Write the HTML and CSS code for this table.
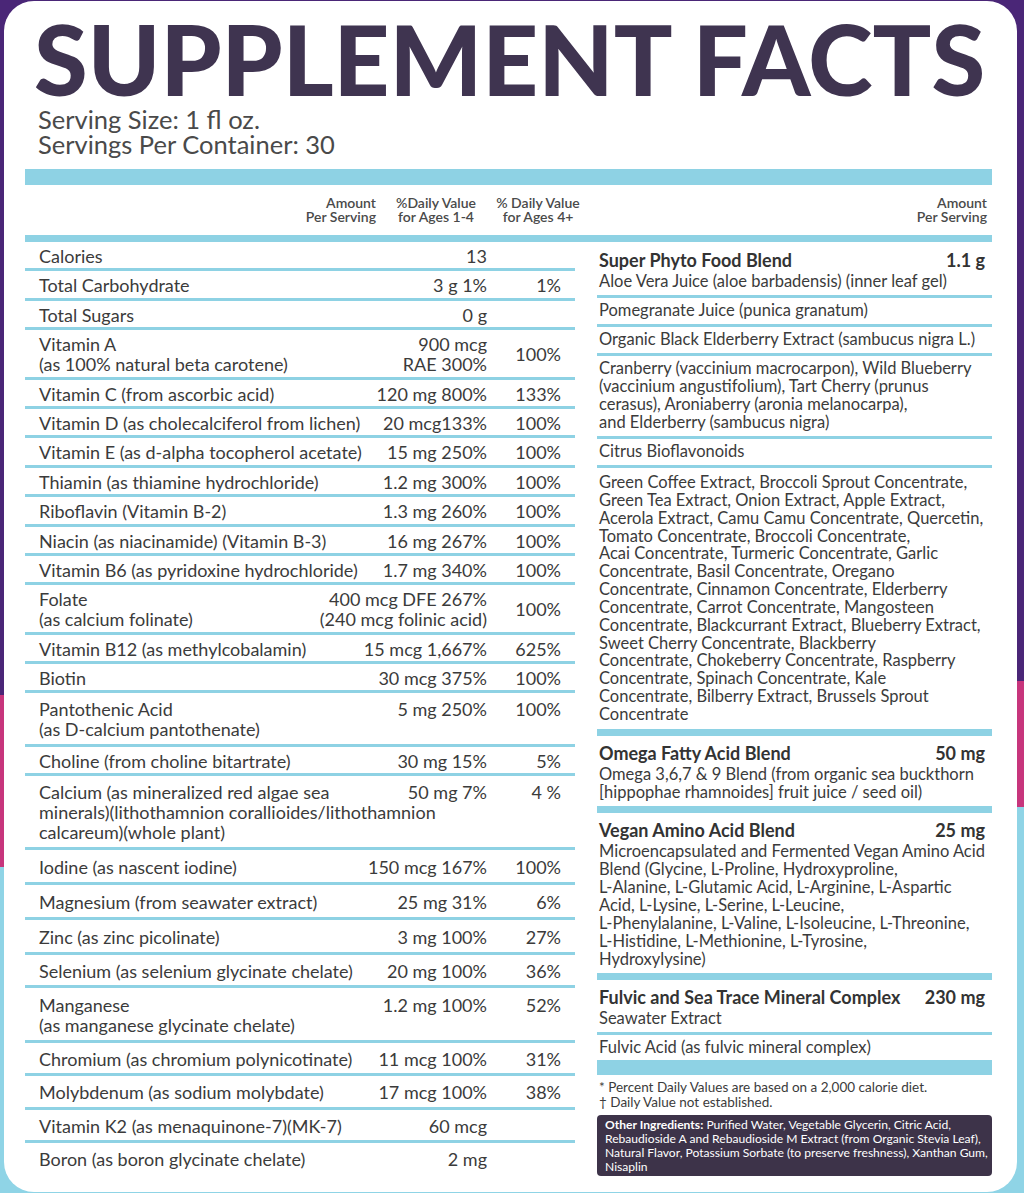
FILE: index.html
```html
<!DOCTYPE html>
<html lang="en">
<head>
    <meta charset="UTF-8">
    <meta name="viewport" content="width=device-width, initial-scale=1.0">
    <title>Supplement Facts</title>
    <link rel="stylesheet" href="styles.css">
</head>
<body>

<div class="label">
    <h1 class="title">SUPPLEMENT FACTS</h1>
    <div class="serving">
        <p>Serving Size: 1 fl oz.</p>
        <p>Servings Per Container: 30</p>
    </div>

    <div class="bar bar-wide"></div>

    <div class="col-head">
        <div class="h-amount">Amount<br>Per Serving</div>
        <div class="h-dv">%Daily Value<br>for Ages 1-4</div>
        <div class="h-dv">% Daily Value<br>for Ages 4+</div>
        <div class="h-right">Amount<br>Per Serving</div>
    </div>

    <div class="bar bar-mid"></div>

    <div class="facts">
        <!-- vitamins and minerals -->
        <div class="nutrients">
            <div class="row"><span class="name">Calories</span><span class="amt">13</span><span class="dv"></span></div>
            <div class="row"><span class="name">Total Carbohydrate</span><span class="amt">3 g 1%</span><span class="dv">1%</span></div>
            <div class="row"><span class="name">Total Sugars</span><span class="amt">0 g</span><span class="dv"></span></div>
            <div class="row"><span class="name">Vitamin A<br>(as 100% natural beta carotene)</span><span class="amt">900 mcg<br>RAE 300%</span><span class="dv mid">100%</span></div>
            <div class="row"><span class="name">Vitamin C (from ascorbic acid)</span><span class="amt">120 mg 800%</span><span class="dv">133%</span></div>
            <div class="row"><span class="name">Vitamin D (as cholecalciferol from lichen)</span><span class="amt">20 mcg133%</span><span class="dv">100%</span></div>
            <div class="row"><span class="name">Vitamin E (as d-alpha tocopherol acetate)</span><span class="amt">15 mg 250%</span><span class="dv">100%</span></div>
            <div class="row"><span class="name">Thiamin (as thiamine hydrochloride)</span><span class="amt">1.2 mg 300%</span><span class="dv">100%</span></div>
            <div class="row"><span class="name">Riboflavin (Vitamin B-2)</span><span class="amt">1.3 mg 260%</span><span class="dv">100%</span></div>
            <div class="row"><span class="name">Niacin (as niacinamide) (Vitamin B-3)</span><span class="amt">16 mg 267%</span><span class="dv">100%</span></div>
            <div class="row"><span class="name">Vitamin B6 (as pyridoxine hydrochloride)</span><span class="amt">1.7 mg 340%</span><span class="dv">100%</span></div>
            <div class="row"><span class="name">Folate<br>(as calcium folinate)</span><span class="amt">400 mcg DFE 267%<br>(240 mcg folinic acid)</span><span class="dv mid">100%</span></div>
            <div class="row"><span class="name">Vitamin B12 (as methylcobalamin)</span><span class="amt">15 mcg 1,667%</span><span class="dv">625%</span></div>
            <div class="row"><span class="name">Biotin</span><span class="amt">30 mcg 375%</span><span class="dv">100%</span></div>
            <div class="row roomy"><span class="name">Pantothenic Acid<br>(as D-calcium pantothenate)</span><span class="amt">5 mg 250%</span><span class="dv">100%</span></div>
            <div class="row"><span class="name">Choline (from choline bitartrate)</span><span class="amt">30 mg 15%</span><span class="dv">5%</span></div>
            <div class="row roomy"><span class="name">Calcium (as mineralized red algae sea<br>minerals)(lithothamnion corallioides/lithothamnion<br>calcareum)(whole plant)</span><span class="amt">50 mg 7%</span><span class="dv">4 %</span></div>
            <div class="row loose"><span class="name">Iodine (as nascent iodine)</span><span class="amt">150 mcg 167%</span><span class="dv">100%</span></div>
            <div class="row loose"><span class="name">Magnesium (from seawater extract)</span><span class="amt">25 mg 31%</span><span class="dv">6%</span></div>
            <div class="row loose"><span class="name">Zinc (as zinc picolinate)</span><span class="amt">3 mg 100%</span><span class="dv">27%</span></div>
            <div class="row roomy"><span class="name">Selenium (as selenium glycinate chelate)</span><span class="amt">20 mg 100%</span><span class="dv">36%</span></div>
            <div class="row loose"><span class="name">Manganese<br>(as manganese glycinate chelate)</span><span class="amt">1.2 mg 100%</span><span class="dv">52%</span></div>
            <div class="row roomy"><span class="name">Chromium (as chromium polynicotinate)</span><span class="amt">11 mcg 100%</span><span class="dv">31%</span></div>
            <div class="row roomy"><span class="name">Molybdenum (as sodium molybdate)</span><span class="amt">17 mcg 100%</span><span class="dv">38%</span></div>
            <div class="row roomy"><span class="name">Vitamin K2 (as menaquinone-7)(MK-7)</span><span class="amt">60 mcg</span><span class="dv"></span></div>
            <div class="row roomy last"><span class="name">Boron (as boron glycinate chelate)</span><span class="amt">2 mg</span><span class="dv"></span></div>
        </div>

        <!-- proprietary blends -->
        <div class="blends">
            <div class="item first">
                <div class="blend-head"><span>Super Phyto Food Blend</span><span>1.1 g</span></div>
                Aloe Vera Juice (aloe barbadensis) (inner leaf gel)
            </div>
            <div class="item">Pomegranate Juice (punica granatum)</div>
            <div class="item">Organic Black Elderberry Extract (sambucus nigra L.)</div>
            <div class="item">Cranberry (vaccinium macrocarpon), Wild Blueberry<br>(vaccinium angustifolium), Tart Cherry (prunus<br>cerasus), Aroniaberry (aronia melanocarpa),<br>and Elderberry (sambucus nigra)</div>
            <div class="item">Citrus Bioflavonoids</div>
            <div class="item group-end dense">Green Coffee Extract, Broccoli Sprout Concentrate,<br>Green Tea Extract, Onion Extract, Apple Extract,<br>Acerola Extract, Camu Camu Concentrate, Quercetin,<br>Tomato Concentrate, Broccoli Concentrate,<br>Acai Concentrate, Turmeric Concentrate, Garlic<br>Concentrate, Basil Concentrate, Oregano<br>Concentrate, Cinnamon Concentrate, Elderberry<br>Concentrate, Carrot Concentrate, Mangosteen<br>Concentrate, Blackcurrant Extract, Blueberry Extract,<br>Sweet Cherry Concentrate, Blackberry<br>Concentrate, Chokeberry Concentrate, Raspberry<br>Concentrate, Spinach Concentrate, Kale<br>Concentrate, Bilberry Extract, Brussels Sprout<br>Concentrate</div>

            <div class="item group-end">
                <div class="blend-head"><span>Omega Fatty Acid Blend</span><span>50 mg</span></div>
                Omega 3,6,7 &amp; 9 Blend (from organic sea buckthorn<br>[hippophae rhamnoides] fruit juice / seed oil)
            </div>

            <div class="item group-end">
                <div class="blend-head"><span>Vegan Amino Acid Blend</span><span>25 mg</span></div>
                Microencapsulated and Fermented Vegan Amino Acid<br>Blend (Glycine, L-Proline, Hydroxyproline,<br>L-Alanine, L-Glutamic Acid, L-Arginine, L-Aspartic<br>Acid, L-Lysine, L-Serine, L-Leucine,<br>L-Phenylalanine, L-Valine, L-Isoleucine, L-Threonine,<br>L-Histidine, L-Methionine, L-Tyrosine,<br>Hydroxylysine)
            </div>

            <div class="item">
                <div class="blend-head"><span>Fulvic and Sea Trace Mineral Complex</span><span>230 mg</span></div>
                Seawater Extract
            </div>
            <div class="item closing">Fulvic Acid (as fulvic mineral complex)</div>

            <div class="notes">
                <p>* Percent Daily Values are based on a 2,000 calorie diet.</p>
                <p>† Daily Value not established.</p>
            </div>

            <div class="other">
                <b>Other Ingredients:</b> Purified Water, Vegetable Glycerin, Citric Acid,<br>Rebaudioside A and Rebaudioside M Extract (from Organic Stevia Leaf),<br>Natural Flavor, Potassium Sorbate (to preserve freshness), Xanthan Gum,<br>Nisaplin
            </div>
        </div>
    </div>
</div>

</body>
</html>
```

FILE: styles.css
```css
body {
    margin: 0;
    font-family: Lato, "Open Sans", sans-serif;
    color: #3b3b3b;
    background:
        linear-gradient(179.2deg, #4a2677 695px, transparent 695px),
        linear-gradient(176.6deg, #c7357c 866px, #8fd4e6 866px);
    height: 1193px;
    overflow: hidden;
}

p {
    margin: 0;
}

.label {
    margin: 1px 7px 0 4px;
    height: 1191px;
    padding: 0 25px 0 21px;
    background-color: white;
    border-radius: 30px;
}

.title {
    margin: 0;
    padding: 10px 0 0 9px;
    font-size: 97.5px;
    line-height: 96px;
    font-weight: 900;
    white-space: nowrap;
    color: #3f3450;
}

.serving {
    padding-left: 13px;
    font-size: 25.5px;
    line-height: 25px;
    color: #4a4a4a;
}

.bar {
    background-color: #8ed2e4;
}

.bar-wide {
    height: 16px;
    margin-top: 12px;
}

.bar-mid {
    height: 7px;
}

/* column titles */
.col-head {
    display: flex;
    align-items: flex-start;
    height: 50px;
    padding-top: 11px;
    box-sizing: border-box;
    font-size: 14px;
    line-height: 14px;
    font-weight: 600;
    color: #4a4a4a;
}

.h-amount {
    width: 351px;
    text-align: right;
}

.h-dv {
    width: 96px;
    margin-left: 12px;
    text-align: center;
}

.h-dv + .h-dv {
    margin-left: 6px;
}

.h-right {
    margin-left: auto;
    margin-right: 5px;
    text-align: right;
}

.facts {
    display: flex;
    justify-content: space-between;
}

/* left table */
.nutrients {
    width: 550px;
}

.row {
    display: grid;
    grid-template-columns: minmax(0, 1fr) auto 74px;
    padding: 4px 14px 2.4px 14px;
    font-size: 18px;
    line-height: 20px;
    border-bottom: 3px solid #8ed2e4;
}

.row.roomy {
    padding-top: 6px;
    padding-bottom: 4.4px;
}

.row.loose {
    padding-top: 7px;
    padding-bottom: 5px;
}

.row.last {
    border-bottom: none;
}

.name,
.amt {
    white-space: nowrap;
}

.amt,
.dv {
    text-align: right;
}

.dv.mid {
    align-self: center;
}

/* right column */
.blends {
    width: 395px;
    font-size: 16.5px;
    line-height: 18px;
}

.item {
    padding: 3px 7px 5px 2px;
    border-bottom: 3px solid #8ed2e4;
    white-space: nowrap;
}

.item.first {
    padding-top: 7px;
}

.item.dense {
    padding-top: 6px;
    line-height: 17.85px;
}

.item.group-end {
    border-bottom-width: 7px;
    padding-bottom: 5px;
}

.item.group-end + .item {
    padding-top: 6px;
}

.item.closing {
    border-bottom-width: 15px;
    padding-bottom: 4px;
}

.blend-head {
    display: flex;
    justify-content: space-between;
    margin-bottom: 1px;
    font-size: 18px;
    line-height: 22px;
    font-weight: 700;
    color: #333;
}

.notes {
    padding: 5px 0 0 2px;
    font-size: 13.5px;
    line-height: 15px;
}

.other {
    margin-top: 5px;
    padding: 3px 8px 2px;
    border-radius: 4px;
    background-color: #3d3349;
    color: white;
    font-size: 12.1px;
    line-height: 14px;
    white-space: nowrap;
}
```
